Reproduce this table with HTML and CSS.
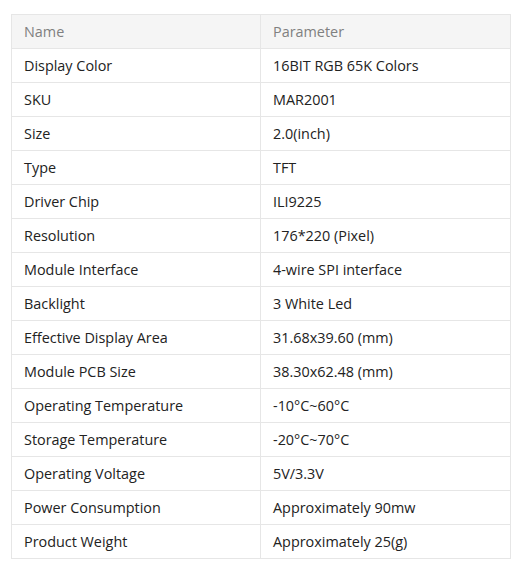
FILE: index.html
```html
<!DOCTYPE html>
<html>
<head>
<meta charset="utf-8">
<link rel="stylesheet" href="styles.css">
</head>
<body>
<div class="wrap">
<table class="spec">
<thead>
<tr><th class="c1">Name</th><th>Parameter</th></tr>
</thead>
<tbody>
<tr><td class="c1">Display Color</td><td>16BIT RGB 65K Colors</td></tr>
<tr><td class="c1">SKU</td><td>MAR2001</td></tr>
<tr><td class="c1">Size</td><td>2.0(inch)</td></tr>
<tr><td class="c1">Type</td><td>TFT</td></tr>
<tr><td class="c1">Driver Chip</td><td>ILI9225</td></tr>
<tr><td class="c1">Resolution</td><td>176*220 (Pixel)</td></tr>
<tr><td class="c1">Module Interface</td><td>4-wire SPI interface</td></tr>
<tr><td class="c1">Backlight</td><td>3 White Led</td></tr>
<tr><td class="c1">Effective Display Area</td><td>31.68x39.60 (mm)</td></tr>
<tr><td class="c1">Module PCB Size</td><td>38.30x62.48 (mm)</td></tr>
<tr><td class="c1">Operating Temperature</td><td>-10°C~60°C</td></tr>
<tr><td class="c1">Storage Temperature</td><td>-20°C~70°C</td></tr>
<tr><td class="c1">Operating Voltage</td><td>5V/3.3V</td></tr>
<tr><td class="c1">Power Consumption</td><td>Approximately 90mw</td></tr>
<tr><td class="c1">Product Weight</td><td>Approximately 25(g)</td></tr>
</tbody>
</table>
</div>
</body>
</html>
```
FILE: styles.css
```css
html, body {
  margin: 0;
  padding: 0;
  background: #fff;
}
.wrap {
  padding: 14px 11px 0 11px;
}
.spec {
  width: 500px;
  border-collapse: collapse;
  font-family: "Open Sans", "Noto Sans", sans-serif;
  font-size: 14.4px;
  color: #222;
}
.spec th, .spec td {
  border: 1px solid #e6e6e6;
  height: 34px;
  padding: 0 12px;
  text-align: left;
  vertical-align: middle;
  box-sizing: border-box;
}
.spec th {
  background: #f5f5f5;
  color: #808080;
  font-weight: normal;
}
.spec .c1 {
  width: 249px;
}
```
